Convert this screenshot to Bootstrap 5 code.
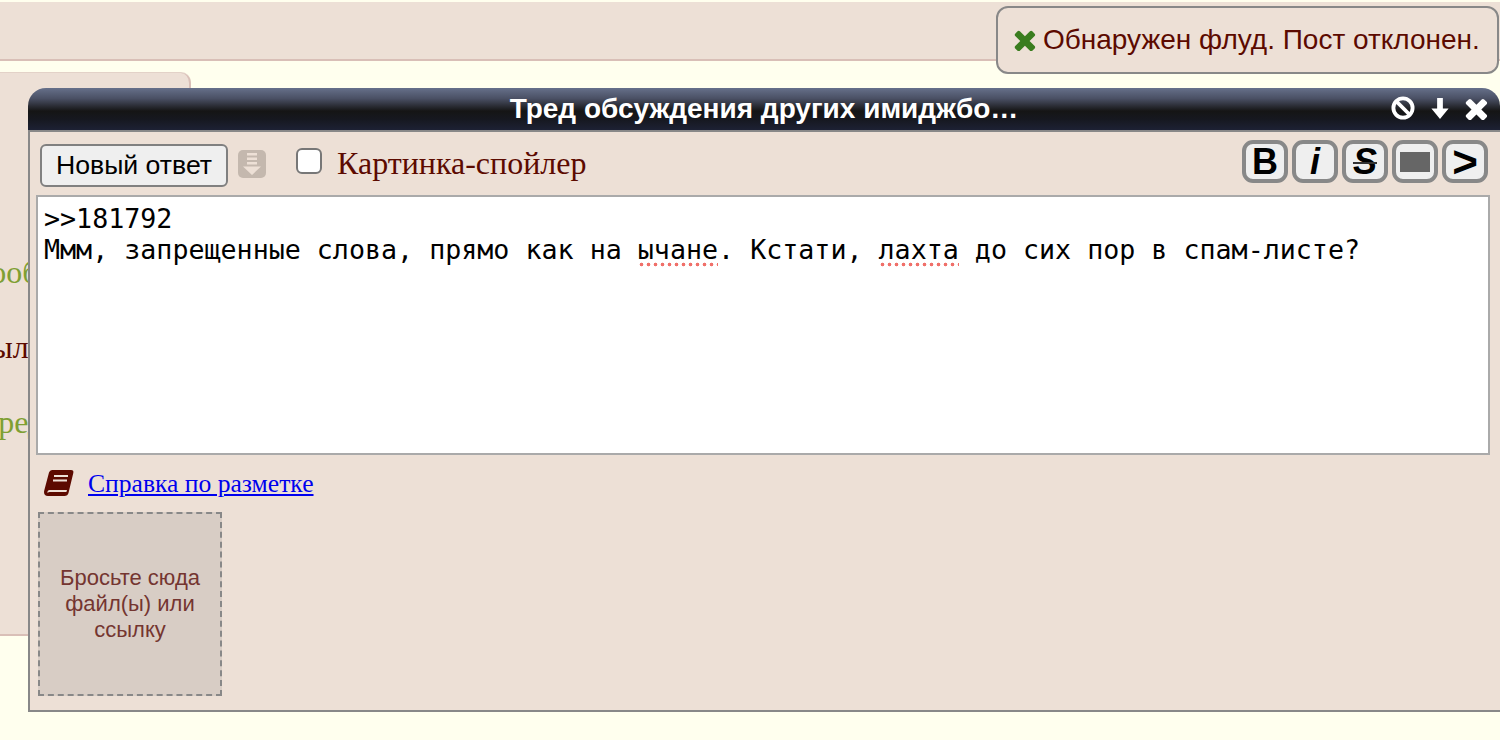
<!DOCTYPE html>
<html lang="ru">
<head>
<meta charset="utf-8">
<title>Тред</title>
<link rel="stylesheet" href="https://cdn.jsdelivr.net/npm/bootstrap@5.3.0/dist/css/bootstrap.min.css">
<style>
html,body{height:740px;overflow:hidden}
body{background:#ffffee;color:#5c0a00;font-family:"Liberation Serif",serif;font-size:26.67px;position:relative;padding-top:2px}
.topstrip{height:59px;background:#ede0d6;border-bottom:2px solid #d9bfb7}
.leftpost{width:191px;height:563px;margin-top:12px;background:#ede0d6;border:2px solid #d9bfb7;border-width:0 2px 2px 0;border-top-right-radius:10px;padding-top:184px;overflow:hidden;position:relative;box-shadow:0 -1px 0 #e3d2c8}
.pline{height:75px;line-height:31px;white-space:nowrap;font-size:32px;margin:0}
.pl1{margin-left:-24px}
.pl2{margin-left:-57px}
.pl3{margin-left:-19px}
.quoteline{color:#7f9f33}
.toastbox{position:absolute;left:996px;top:6px;width:503px;height:68px;background:#ede0d6;border:2px solid #888;border-radius:12px;font:28px/64px "Liberation Sans",sans-serif;color:#5c0a00;padding-left:16px;display:flex;align-items:center;gap:7px;z-index:5}
.replywin{position:absolute;left:28px;top:88px;width:1472px;height:624px;display:flex;flex-direction:column}
.wintitle{height:42px;flex:none;border-radius:18px 18px 0 0;background:linear-gradient(#66708a 0%,#4a5064 25%,#151515 55%,#161820 75%,#1d2134 100%);color:#fff;font:bold 28px/41px "Liberation Sans",sans-serif;text-align:center;position:relative}
.wintools{position:absolute;right:12px;top:-1px;height:42px;display:flex;align-items:center;gap:16px}
.winbody{flex:1;background:#ede0d6;border:2px solid #888;border-right:0;padding:12px 12px 0 8px;display:flex;flex-direction:column;position:relative}
.toolrow{height:43px;display:flex;align-items:flex-start}
.replybtn{width:188px;height:43px;margin-left:2px;background:#efefef;border:2px solid #808080;border-radius:6px;color:#000;font:26.67px/1 "Liberation Sans",sans-serif;padding:0}
.arrowtile{width:28px;height:28px;margin:6px 0 0 10px;background:#c4b8ae;border-radius:5px;display:flex;align-items:center;justify-content:center}
.spoilerbox{width:26px;height:26px;margin:4px 15px 0 30px;background:#fff;border:2px solid #777;border-radius:6px;flex:none}
.spoilerlabel{font-size:32px;line-height:36px;margin-top:1px}
.fmtgroup{margin-left:auto;display:flex;gap:4px;margin-top:-4px}
.fmtbtn{width:46px;height:43px;background:#efefef;border:4px solid #888;border-radius:11px;color:#000;font:bold 36px/34px "Liberation Sans",sans-serif;padding:0;display:flex;align-items:center;justify-content:center}
.fmtstrike{text-decoration:line-through;text-decoration-thickness:2px;text-decoration-color:#333}
.fmtquote{font-size:44px}
.fmtrect{width:30px;height:20px;background:#666;display:block}
.msgarea{height:260px;margin:8px -2px 0 -2px;background:#fff;border:2px solid #aaa;padding:6px 6px;font:26.67px/31px "DejaVu Sans Mono",monospace;color:#000;white-space:pre-wrap}
.spellbad{padding-bottom:2px;background:radial-gradient(circle at center,#f0706a 1.7px,transparent 2.1px) left bottom/7px 5px repeat-x}
.helprow{display:flex;align-items:center;height:30px;margin-top:14px;padding-left:6px;gap:14px}
.helprow a{color:#0000ee;font-size:25.6px}
.dropzone{width:184px;height:184px;margin-top:13px;background:#d8cdc5;border:2px dashed #888;color:#743530;font:22px/26px "Liberation Sans",sans-serif;text-align:center;display:flex;align-items:center;justify-content:center;padding:0 16px}
</style>
</head>
<body>
<div class="topstrip"></div>
<div class="leftpost">
  <p class="pline pl1 quoteline">сообщение</p>
  <p class="pline pl2">посылка</p>
  <p class="pline pl3 quoteline">предел</p>
</div>

<div class="toastbox">
  <svg width="22" height="22" viewBox="260 260 1280 1280" aria-hidden="true"><path fill="#3a7d1f" d="M1490 1322q0 40-28 68l-136 136q-28 28-68 28t-68-28l-294-294-294 294q-28 28-68 28t-68-28l-136-136q-28-28-28-68t28-68l294-294-294-294q-28-28-28-68t28-68l136-136q28-28 68-28t68 28l294 294 294-294q28-28 68-28t68 28l136 136q28 28 28 68t-28 68l-294 294 294 294q28 28 28 68z"/></svg>
  <span>Обнаружен флуд. Пост отклонен.</span>
</div>

<div class="replywin">
  <div class="wintitle">Тред обсуждения других имиджбо…
    <div class="wintools">
      <svg width="24" height="24" viewBox="0 0 25 25" aria-hidden="true"><circle cx="12.5" cy="12.500" r="10" fill="none" stroke="#fff" stroke-width="4"/><path d="M6 6l13 13" stroke="#fff" stroke-width="4"/></svg>
      <svg width="18" height="22" viewBox="0 0 18 23" aria-hidden="true"><path fill="#fff" d="M6 1h6v11h6l-9 11-9-11h6z"/></svg>
      <svg width="23" height="23" viewBox="260 260 1280 1280" aria-hidden="true"><path fill="#fff" d="M1490 1322q0 40-28 68l-136 136q-28 28-68 28t-68-28l-294-294-294 294q-28 28-68 28t-68-28l-136-136q-28-28-28-68t28-68l294-294-294-294q-28-28-28-68t28-68l136-136q28-28 68-28t68 28l294 294 294-294q28-28 68-28t68 28l136 136q28 28 28 68t-28 68l-294 294 294 294q28 28 28 68z"/></svg>
    </div>
  </div>
  <div class="winbody">
    <div class="toolrow">
      <button type="button" class="replybtn">Новый ответ</button>
      <span class="arrowtile">
        <svg width="20" height="24" viewBox="0 0 20 24" aria-hidden="true"><path fill="#ede0d6" d="M5 1h10v2.500H5zM5 5.500h10v2.500H5zM5 10h10v2.500H5zM1 14.500h18L10 23z"/></svg>
      </span>
      <span class="spoilerbox"></span>
      <span class="spoilerlabel">Картинка-спойлер</span>
      <div class="fmtgroup">
        <button type="button" class="fmtbtn">B</button>
        <button type="button" class="fmtbtn fst-italic">i</button>
        <button type="button" class="fmtbtn fst-italic"><span class="fmtstrike">S</span></button>
        <button type="button" class="fmtbtn" aria-label="Спойлер"><span class="fmtrect"></span></button>
        <button type="button" class="fmtbtn fmtquote">&gt;</button>
      </div>
    </div>
    <div class="msgarea">&gt;&gt;181792
Ммм, запрещенные слова, прямо как на <span class="spellbad">ычане</span>. Кстати, <span class="spellbad">лахта</span> до сих пор в спам-листе?</div>
    <div class="helprow">
      <svg width="30" height="28" viewBox="0 0 30 28" aria-hidden="true"><path fill="#5c0a00" d="M8 0h19q3 0 2.300 3L24.500 23q-.8 3-4 3H4q-4 0-4-4 0-1 .5-2.500L5 2.500Q5.800 0 8 0z"/><path fill="#ede0d6" d="M10 5h14v2H10zM9 9.500h14v2H9z"/><path fill="#ede0d6" d="M3.500 21.500q.3-1.500 2-1.500H23l-.6 2H5.500q-1 0-2 1z"/></svg>
      <a href="#">Справка по разметке</a>
    </div>
    <div class="dropzone">Бросьте сюда файл(ы) или ссылку</div>
  </div>
</div>
</body>
</html>
